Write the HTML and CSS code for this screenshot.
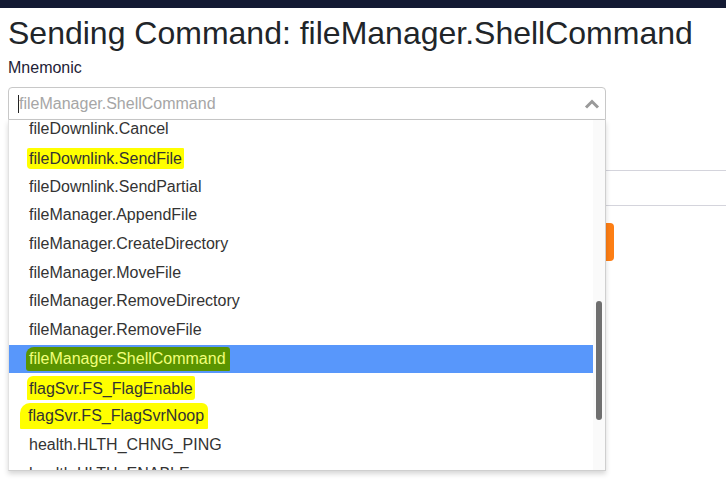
FILE: index.html
```html
<!DOCTYPE html>
<html lang="en">
<head>
<meta charset="utf-8">
<title>Sending Command</title>
<link rel="stylesheet" href="styles.css">
</head>
<body>
<div class="topbar"></div>
<main class="page">
  <h1 class="title">Sending Command: fileManager.ShellCommand</h1>
  <label class="label">Mnemonic</label>
  <div class="select">
    <div class="select-box">
      <span class="caret"></span>
      <span class="placeholder">fileManager.ShellCommand</span>
      <svg class="chevron" width="16" height="10" viewBox="0 0 16 10"><polyline points="2,8.5 8,2.5 14,8.5" fill="none" stroke="#9a9a9a" stroke-width="3"/></svg>
    </div>
    <div class="dropdown">
      <div class="items">
        <ul class="list">
          <li class="row">fileDownlink.Cancel</li>
          <li class="row"><span class="hl hl-a">fileDownlink.SendFile</span></li>
          <li class="row">fileDownlink.SendPartial</li>
          <li class="row">fileManager.AppendFile</li>
          <li class="row">fileManager.CreateDirectory</li>
          <li class="row">fileManager.MoveFile</li>
          <li class="row">fileManager.RemoveDirectory</li>
          <li class="row">fileManager.RemoveFile</li>
          <li class="row selected"><span class="hl hl-sel">fileManager.ShellCommand</span></li>
          <li class="row"><span class="hl hl-b">flagSvr.FS_FlagEnable</span></li>
          <li class="row"><span class="hl hl-c">flagSvr.FS_FlagSvrNoop</span></li>
          <li class="row">health.HLTH_CHNG_PING</li>
          <li class="row">health.HLTH_ENABLE</li>
        </ul>
      </div>
      <div class="track"><div class="thumb"></div></div>
    </div>
  </div>
  <div class="args"></div>
  <button class="send" type="button">Send Command</button>
</main>
</body>
</html>
```
FILE: styles.css
```css
html, body {
  margin: 0;
  padding: 0;
  background: #fff;
}
body {
  font-family: "Liberation Sans", Arial, sans-serif;
  color: #212529;
  min-height: 100vh;
}
.topbar {
  height: 8px;
  background: #131a33;
}
.page {
  padding-left: 8px;
  min-height: 483px;
}
.title {
  margin: 0;
  padding-top: 6px;
  font-size: 32px;
  font-weight: 400;
  line-height: 38px;
  color: #212529;
}
.label {
  display: block;
  margin-top: 6px;
  font-size: 16px;
  line-height: 20px;
  color: #1e2235;
}
.select {
  position: relative;
  z-index: 2;
  width: 598px;
  margin-top: 9px;
}
.select-box {
  box-sizing: border-box;
  height: 33px;
  border: 1px solid #c8c8c8;
  border-radius: 4px 4px 0 0;
  display: flex;
  align-items: center;
  padding-left: 9px;
  padding-right: 5px;
}
.caret {
  width: 1px;
  height: 18px;
  background: #222;
}
.placeholder {
  flex: 1;
  font-size: 16px;
  color: #a6a6a6;
}
.chevron {
  display: block;
}
.dropdown {
  position: absolute;
  top: 33px;
  left: 0;
  right: 0;
  height: 350px;
  display: flex;
  background: #fff;
  border-left: 1px solid #e2e2e2;
  border-right: 1px solid #cfcfcf;
  border-bottom: 1px solid #cfcfcf;
  box-shadow: 0 3px 5px rgba(0, 0, 0, 0.16);
  overflow: hidden;
}
.items {
  flex: 1;
  overflow: hidden;
}
.list {
  list-style: none;
  margin: -5px 0 0 0;
  padding: 0;
}
.row {
  height: 28.7px;
  display: flex;
  align-items: center;
  padding-left: 20px;
  font-size: 16px;
  color: #333;
}
.row.selected {
  background: #5897fb;
  color: #fff;
}
.hl {
  background: #ffff00;
  padding: 3px 2px 1px;
  margin-left: -2px;
}
.hl-a {
  border-radius: 2px 1px 2px 4px;
  padding-top: 2px;
  padding-bottom: 1px;
}
.hl-b {
  border-radius: 6px 2px 3px 1px;
  padding: 4px 2px 2px;
}
.hl-c {
  padding: 4px 4px 4px 8px;
  margin-left: -9px;
  border-radius: 10px 6px 1px 1px;
}
.hl-sel {
  background: #5a9400;
  color: #f2ff7a;
  padding: 3px 4px 3px 3px;
  margin-left: -3px;
  border-radius: 8px 3px 1px 3px;
}
.track {
  width: 12px;
  background: #fafafa;
  display: flex;
  justify-content: center;
}
.thumb {
  width: 6px;
  height: 119px;
  margin-top: 181px;
  border-radius: 3px;
  background: #6f6f6f;
}
.args {
  height: 36px;
  margin-top: 50px;
  border-top: 1px solid #d4d4dc;
  border-bottom: 1px solid #d4d4dc;
  box-sizing: border-box;
}
.send {
  display: block;
  margin-top: 17px;
  width: 606px;
  height: 38px;
  border: 0;
  border-radius: 4px;
  background: #fd7e14;
  color: #fff;
  font-family: inherit;
  font-size: 16px;
}
```
